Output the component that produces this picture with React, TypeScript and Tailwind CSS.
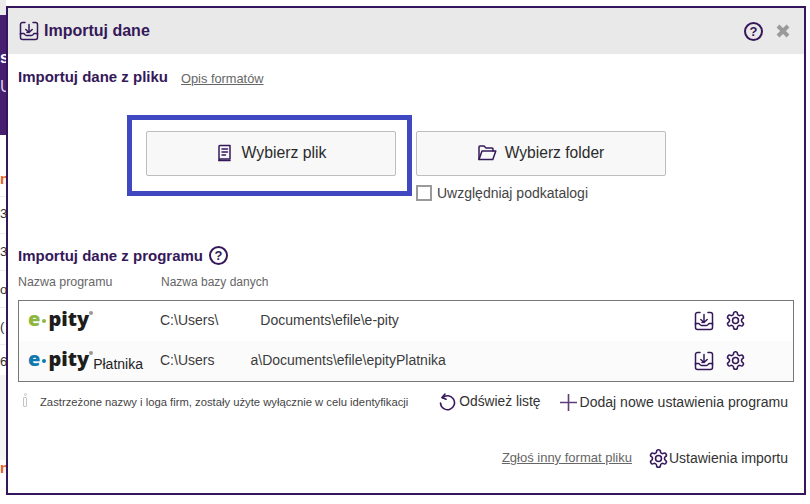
const F = "[font-family:'Liberation_Sans',Arial,sans-serif]";

function ImportIcon({ size = 20 }: { size?: number }) {
  return (
    <svg width={size} height={size} viewBox="0 0 20 20" fill="none" stroke="#35185a" strokeWidth="1.5" strokeLinecap="round" strokeLinejoin="round">
      <path d="M6 1.5H3.5a2 2 0 0 0-2 2v10" />
      <path d="M14 1.5h2.5a2 2 0 0 1 2 2v10" />
      <path d="M1.5 12.5h3.2c1 0 1.2 2 2.8 2h5c1.6 0 1.8-2 2.8-2h3.2v4a2 2 0 0 1-2 2h-13a2 2 0 0 1-2-2z" />
      <path d="M10 3.5v6.5c0 1-1 1.5-2 1.5" />
      <path d="M6.8 8.5 10 11.5l3.2-3" />
    </svg>
  );
}

function Gear({ size = 21 }: { size?: number }) {
  return (
    <svg width={size} height={size} viewBox="0 0 24 24" fill="none" stroke="#35185a" strokeWidth="1.8" strokeLinecap="round" strokeLinejoin="round">
      <path d="M12.22 2h-.44a2 2 0 0 0-2 2v.18a2 2 0 0 1-1 1.73l-.43.25a2 2 0 0 1-2 0l-.15-.08a2 2 0 0 0-2.73.73l-.22.38a2 2 0 0 0 .73 2.73l.15.1a2 2 0 0 1 1 1.72v.51a2 2 0 0 1-1 1.74l-.15.09a2 2 0 0 0-.73 2.73l.22.38a2 2 0 0 0 2.73.73l.15-.08a2 2 0 0 1 2 0l.43.25a2 2 0 0 1 1 1.73V20a2 2 0 0 0 2 2h.44a2 2 0 0 0 2-2v-.18a2 2 0 0 1 1-1.73l.43-.25a2 2 0 0 1 2 0l.15.08a2 2 0 0 0 2.73-.73l.22-.39a2 2 0 0 0-.73-2.73l-.15-.08a2 2 0 0 1-1-1.74v-.5a2 2 0 0 1 1-1.74l.15-.09a2 2 0 0 0 .73-2.73l-.22-.38a2 2 0 0 0-2.73-.73l-.15.08a2 2 0 0 1-2 0l-.43-.25a2 2 0 0 1-1-1.73V4a2 2 0 0 0-2-2z" />
      <circle cx="12" cy="12" r="3.4" />
    </svg>
  );
}

function Help() {
  return (
    <span className="flex h-[19px] w-[19px] items-center justify-center rounded-full border-2 border-[#35185a] text-[13px] leading-none font-bold text-[#35185a]">?</span>
  );
}

function FileIcon() {
  return (
    <svg width="16" height="18" viewBox="0 0 16 18" fill="none" stroke="#35185a" strokeWidth="1.5" strokeLinecap="round" strokeLinejoin="round">
      <path d="M3 1.5h10v13.5H3.5A1.5 1.5 0 0 0 2 16.5V2.5a1 1 0 0 1 1-1z" />
      <path d="M2 16.5h11" />
      <path d="M5 5h5.5M5 8h5.5M5 11h3.5" />
    </svg>
  );
}

function FolderIcon() {
  return (
    <svg width="19" height="16" viewBox="0 0 19 16" fill="none" stroke="#35185a" strokeWidth="1.5" strokeLinecap="round" strokeLinejoin="round">
      <path d="M1 14.5V2a1 1 0 0 1 1-1h4l2 2h6a1 1 0 0 1 1 1v2" />
      <path d="M1 14.5 4 6h13.8l-3 8.5z" />
    </svg>
  );
}

function Logo({ green, suffix }: { green?: boolean; suffix?: string }) {
  return (
    <div className="mb-[3px] flex w-[132px] items-end">
      <span className={`text-[20px] leading-[22px] font-extrabold ${green ? "text-[#8cb63c]" : "text-[#0f78ad]"} [font-family:'Open_Sans',sans-serif]`}>e</span>
      <span className={`mx-[2px] mb-[7px] h-[4px] w-[4px] rounded-full ${green ? "bg-[#8cb63c]" : "bg-[#0f78ad]"}`} />
      <span className="text-[20px] leading-[22px] font-extrabold text-[#1d1d1b] [font-family:'Open_Sans',sans-serif]">pity</span>
      <span className="mb-[15px] h-[4px] w-[4px] rounded-full bg-[#999]" />
      {suffix && <span className="-mb-[3px] text-[14px] leading-[18px] text-[#222]">{suffix}</span>}
    </div>
  );
}

function Row({ logo, path1, gap, path2, tint }: { logo: React.ReactNode; path1: string; gap: string; path2: string; tint?: boolean }) {
  return (
    <div className={`flex h-10 items-center pr-[47px] pl-[9px] ${tint ? "bg-[#fbfbfb]" : ""}`}>
      {logo}
      <span className="text-[14px] text-[#3b3b3b]">{path1}</span>
      <span className={gap} />
      <span className="flex-1 text-[14px] text-[#3b3b3b]">{path2}</span>
      <div className="flex items-center gap-[11px]">
        <ImportIcon />
        <Gear />
      </div>
    </div>
  );
}

function Strip() {
  return (
    <div className="flex h-full w-[6px] flex-col overflow-hidden text-[13px] leading-none text-[#333]">
      <div className="h-[15px] shrink-0 bg-[#ececec]" />
      <div className="flex h-[120px] shrink-0 flex-col bg-[#46206f] pt-[35px] text-[16px] font-bold text-white">
        <span>s</span>
        <span className="mt-[13px] font-normal text-[#d9d0e3]">U</span>
      </div>
      <div className="flex h-[62px] shrink-0 items-end border-b border-[#ececec] pb-[10px] text-[15px] font-bold text-[#e8602c]">n</div>
      <div className="flex h-[37px] shrink-0 items-center border-b border-[#ececec] pb-[3px]">3</div>
      <div className="flex h-[37px] shrink-0 items-center border-b border-[#ececec] pb-[2px]">3</div>
      <div className="flex h-[37px] shrink-0 items-center border-b border-[#ececec]">o</div>
      <div className="flex h-[37px] shrink-0 items-center border-b border-[#ececec]">(</div>
      <div className="flex h-[30px] shrink-0 items-center pt-[2px]">6</div>
      <div className="h-[85px] shrink-0 bg-[#f4f4f4]" />
      <div className="flex h-[35px] shrink-0 items-start text-[15px] font-bold text-[#e8602c]">n</div>
    </div>
  );
}

export default function App() {
  return (
    <div className={`relative h-[504px] w-[810px] overflow-hidden bg-white ${F}`}>
      <Strip />
      <div className="absolute top-[6px] left-[6px] flex h-[489px] w-[800px] flex-col border-2 border-[#35165c] bg-white">
        <div className="flex h-[46px] items-center bg-[#e9e9e9] pr-[14px] pl-[11px]">
          <ImportIcon />
          <span className="ml-[5px] flex-1 text-[16px] font-bold text-[#35185a]">Importuj dane</span>
          <Help />
          <svg className="ml-[13px]" width="14" height="14" viewBox="0 0 14 14" stroke="#9a9a9a" strokeWidth="4"><path d="M2 2l10 10M12 2 2 12" /></svg>
        </div>
        <div className="flex flex-1 flex-col pr-[10px] pl-[10px]">
          <div className="mt-[12px] flex items-center">
            <span className="text-[15px] font-bold text-[#35185a]">Importuj dane z pliku</span>
            <span className="mt-[3px] ml-[13px] text-[12.8px] text-[#666] underline">Opis formatów</span>
          </div>
          <div className="mt-[26px] ml-[109px] flex items-start">
            <div className="border-[5px] border-[#3f48c0] pt-[11px] pr-[11px] pb-[15px] pl-[14px]">
              <button className="flex h-[45px] w-[250px] items-center justify-center gap-[8px] rounded-[2px] border border-[#bdbdbd] bg-[#f8f8f8] pl-[2px] text-[15.8px] text-[#2b2b2b]">
                <FileIcon />Wybierz plik
              </button>
            </div>
            <div className="ml-[4px] pt-[16px]">
              <button className="flex h-[45px] w-[250px] items-center justify-center gap-[8px] rounded-[2px] border border-[#bdbdbd] bg-[#f8f8f8] text-[15.6px] text-[#2b2b2b]">
                <FolderIcon />Wybierz folder
              </button>
              <label className="mt-[7px] flex items-center gap-[5px] text-[14px] text-[#444]">
                <span className="h-[16px] w-[16px] border-2 border-[#9a9a9a] bg-white" />Uwzględniaj podkatalogi
              </label>
            </div>
          </div>
          <div className="mt-[41px] flex items-center gap-[6px]">
            <span className="text-[15px] font-bold text-[#35185a]">Importuj dane z programu</span>
            <Help />
          </div>
          <div className="mt-[6px] flex text-[12px] text-[#666]">
            <span className="w-[143px] text-[12.4px]">Nazwa programu</span>
            <span>Nazwa bazy danych</span>
          </div>
          <div className="mt-[8px] flex h-[82px] flex-col border border-[#777] bg-white">
            <Row logo={<Logo green />} path1="C:\Users\" gap="w-[42px]" path2="Documents\efile\e-pity" />
            <Row tint logo={<Logo suffix="Płatnika" />} path1="C:\Users" gap="w-[36px]" path2="a\Documents\efile\epityPlatnika" />
          </div>
          <div className="mt-[10px] flex items-center">
            <span className="ml-[4px] flex h-[18px] w-[6px] flex-col items-center">
              <span className="h-[3px] w-[3px] rounded-full border border-[#c4c4c4]" />
              <span className="mt-[1px] h-[10px] w-[4px] rounded-[1px] border border-[#c4c4c4]" />
            </span>
            <span className="ml-[12px] flex-1 text-[11.25px] text-[#444]">Zastrzeżone nazwy i loga firm, zostały użyte wyłącznie w celu identyfikacji</span>
            <svg width="18" height="18" viewBox="0 0 18 18" fill="none" stroke="#35185a" strokeWidth="1.6" strokeLinecap="round" strokeLinejoin="round"><path d="M4.5 4.8A7 7 0 1 1 2.5 10" /><path d="M7 1 4 4.6l4 1.6" /></svg>
            <span className="ml-[3px] text-[13.8px] text-[#333]">Odśwież listę</span>
            <svg className="ml-[18px]" width="19" height="19" viewBox="0 0 19 19" stroke="#5f3d78" strokeWidth="1.6"><path d="M9.5 1v17M1 9.5h17" /></svg>
            <span className="mr-[6px] ml-[2px] text-[14.06px] text-[#333]">Dodaj nowe ustawienia programu</span>
          </div>
          <div className="mt-[35px] flex items-center justify-end pr-[6px]">
            <span className="text-[13px] text-[#666] underline">Zgłoś inny format pliku</span>
            <span className="ml-[16px]"><Gear /></span>
            <span className="text-[14px] text-[#333]">Ustawienia importu</span>
          </div>
        </div>
      </div>
    </div>
  );
}
